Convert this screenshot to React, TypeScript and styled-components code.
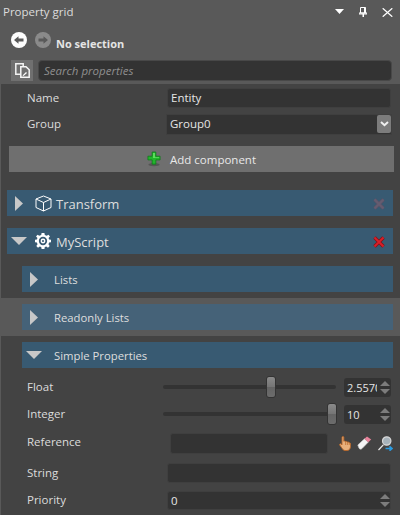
import React from 'react';
import styled, {createGlobalStyle} from 'styled-components';

const GlobalStyle = createGlobalStyle`
  html, body {
    margin: 0;
    padding: 0;
    background: #595959;
  }
  * {
    box-sizing: border-box;
  }
`

const BackIcon = ({dim, flip}: { dim?: boolean, flip?: boolean }) => (
    <svg width="18" height="18" viewBox="0 0 18 18" style={{opacity: dim ? 0.3 : 1, transform: flip ? 'scaleX(-1)' : undefined}}>
        <circle cx="9" cy="9" r="8" fill="#fdfdfd"/>
        <path d="M4 9 L8.5 5.2 V7.4 H13.5 V10.6 H8.5 V12.8 Z" fill="#5a5a5a"/>
    </svg>
)

const PasteIcon = () => (
    <svg width="15" height="15" viewBox="0 0 15 15">
        <path d="M.8 .8 H8.2 V11.2 H.8 Z" fill="none" stroke="#f2f2f2" strokeWidth="1.5"/>
        <path d="M5.8 3.8 H11 L14.2 6.8 V14.2 H5.8 Z" fill="#6f6f6f" stroke="#f6f6f6" strokeWidth="1.5"/>
        <path d="M7.5 12.5 L11 9 L12 10 L8.5 13 Z" fill="#fff"/>
    </svg>
)

const Caret = () => (
    <svg width="9" height="6" viewBox="0 0 9 6"><path d="M0 0 H9 L4.5 5 Z" fill="#fff"/></svg>
)

const Pin = () => (
    <svg width="8" height="10" viewBox="0 0 8 10">
        <path d="M1.5 .5 H6.5 V6 H1.5 Z M0 6 H8 V7 H0 Z" fill="none" stroke="#fff"/>
        <path d="M3.5 6.5 H5 V10 H3.5 Z M5 .5 H6.5 V6 H5 Z" fill="#fff"/>
    </svg>
)

const Close = () => (
    <svg width="11" height="9" viewBox="0 0 11 9">
        <path d="M.7 .3 L10.3 8.7 M10.3 .3 L.7 8.7" stroke="#fff" strokeWidth="1.3"/>
    </svg>
)

const Chevron = () => (
    <svg width="9" height="6" viewBox="0 0 9 6">
        <path d="M1 1 L4.5 4.2 L8 1" fill="none" stroke="#f0f0f0" strokeWidth="2"/>
    </svg>
)

const PlusIcon = () => (
    <svg width="14" height="16" viewBox="0 0 15 17">
        <ellipse cx="7.5" cy="14.5" rx="6" ry="1.8" fill="#555"/>
        <path d="M5.5 1 H9.5 V5.5 H14 V9.5 H9.5 V14 H5.5 V9.5 H1 V5.5 H5.5 Z" fill="#22b52c" stroke="#0c7a18" strokeWidth="0.8"/>
        <path d="M6.5 2 H8.5 V6.5 H13 V7.5 H6.5 Z" fill="#5fe05f"/>
    </svg>
)

const CubeIcon = () => (
    <svg width="17" height="17" viewBox="0 0 17 17" fill="none" stroke="#fff" strokeWidth="1">
        <path d="M8.5 1 L16 4 V12.5 L8.5 16 L1 12.5 V4 Z"/>
        <path d="M1 4 L8.5 7.5 L16 4 M8.5 7.5 V16"/>
    </svg>
)

const GearIcon = () => (
    <svg width="16" height="16" viewBox="0 0 17 17">
        <path
            d="M7 0 H10 L10.4 2.2 L12.4 3 L14.3 1.8 L15.9 3.8 L14.4 5.4 L15 7 L17 7.2 V9.8 L15 10.2 L14.3 12 L15.6 13.8 L13.8 15.6 L12 14.3 L10.4 15 L10 17 H7 L6.6 15 L5 14.3 L3.2 15.6 L1.4 13.8 L2.7 12 L2 10.2 L0 9.8 V7.2 L2 7 L2.6 5.4 L1.1 3.8 L2.7 1.8 L4.6 3 L6.6 2.2 Z"
            fill="#fff"/>
        <circle cx="8.5" cy="8.5" r="4.4" fill="#385a72"/>
        <circle cx="8.5" cy="8.5" r="2.6" fill="#fff"/>
        <circle cx="8.5" cy="8.5" r="1.1" fill="#385a72"/>
    </svg>
)

const RemoveIcon = ({muted}: { muted?: boolean }) => (
    <svg width="12" height="12" viewBox="0 0 12 12">
        <path d="M1.5 1.5 L10.5 10.5 M10.5 1.5 L1.5 10.5" stroke={muted ? '#5a5468' : '#8c0f14'} strokeWidth="3.4"/>
        <path d="M1.5 1.5 L10.5 10.5 M10.5 1.5 L1.5 10.5" stroke={muted ? '#665c70' : '#d9202a'} strokeWidth="1.8"/>
    </svg>
)

const HandIcon = () => (
    <svg width="12" height="15" viewBox="0 0 12 15">
        <path
            d="M3 1.2 C3 .2 4.8 .2 4.8 1.2 V5.2 C5.6 4.8 6.4 5 6.6 5.6 C7.4 5.2 8.2 5.5 8.4 6.1 C9.2 5.8 10 6.1 10.2 6.8 C10.9 6.6 11.5 7.1 11.5 7.8 V10.5 C11.5 12.8 10.2 14.5 8 14.5 H6 C4.6 14.5 3.6 13.4 3 12.2 L.7 9 C.3 8.2 1.2 7.4 2 8 L3 9 Z"
            fill="#e8b07c" stroke="#b8682a" strokeWidth="0.9"/>
        <path d="M6.6 5.6 V9 M8.4 6.1 V9 M10.2 6.8 V9" stroke="#b8682a" strokeWidth="0.7" fill="none"/>
    </svg>
)

const EraserIcon = () => (
    <svg width="15" height="14" viewBox="0 0 15 14">
        <path d="M.8 9 L7.5 2.8 L11.2 6.2 L5 12.6 C4 13.6 2.8 13.2 2 12.2 Z" fill="#f4f4f4" stroke="#cfcfcf" strokeWidth="0.6"/>
        <path d="M7.5 2.8 L10 .5 L14.2 3.5 L11.2 6.2 Z" fill="#e8829a"/>
    </svg>
)

const PickerIcon = () => (
    <svg width="15" height="15" viewBox="0 0 15 15">
        <path d="M.5 14 L5.3 8.8" stroke="#eee" strokeWidth="1.2"/>
        <circle cx="8.7" cy="5" r="4.2" fill="#a6b2ba" stroke="#d8d8d8" strokeWidth="1.2"/>
        <path d="M7.5 12.5 H13.5 M11.5 10.3 L14 12.5 L11.5 14.7" fill="none" stroke="#2a9be0" strokeWidth="1.6"/>
    </svg>
)

const Triangle = ({open}: { open?: boolean }) => (
    open
        ? <svg width="16" height="8" viewBox="0 0 16 8"><path d="M0 0 H16 L8 8 Z" fill="#c8c8c8"/></svg>
        : <svg width="8" height="15" viewBox="0 0 8 15"><path d="M0 0 L8 7.5 L0 15 Z" fill="#c8c8c8"/></svg>
)

const Spinner = () => (
    <SpinArrows>
        <svg width="10" height="5" viewBox="0 0 10 5"><path d="M5 0 L10 5 H0 Z" fill="#7c7c7c"/></svg>
        <svg width="10" height="5" viewBox="0 0 10 5"><path d="M0 0 H10 L5 5 Z" fill="#7c7c7c"/></svg>
    </SpinArrows>
)

const Section = ({title, top, indent, open, hover, icon, remove}: {
    title: string, top?: number, indent?: boolean, open?: boolean, hover?: boolean, icon?: React.ReactNode, remove?: React.ReactNode
}) => (
    <SectionBar top={top} indent={indent} hover={hover}>
        <ArrowSlot indent={indent}><Triangle open={open}/></ArrowSlot>
        {icon && <IconSlot>{icon}</IconSlot>}
        <SectionTitle indent={indent}>{title}</SectionTitle>
        {remove && <RemoveSlot>{remove}</RemoveSlot>}
    </SectionBar>
)

const App = () => {
    return (
        <Panel>
            <GlobalStyle/>
            <TitleBar>
                <Title>Property grid</Title>
                <TitleButtons>
                    <Caret/>
                    <Pin/>
                    <Close/>
                </TitleButtons>
            </TitleBar>
            <NavRow>
                <BackIcon/>
                <BackIcon dim flip/>
                <Selection>No selection</Selection>
            </NavRow>
            <SearchRow>
                <ToggleButton><PasteIcon/></ToggleButton>
                <SearchBox>Search properties</SearchBox>
            </SearchRow>
            <Grid>
                <Row>
                    <Label>Name</Label>
                    <Field>Entity</Field>
                </Row>
                <Row top={6}>
                    <Label lift={1}>Group</Label>
                    <ComboField>
                        Group0
                        <ComboButton><Chevron/></ComboButton>
                    </ComboField>
                </Row>
                <AddButton>
                    <PlusIcon/>
                    Add component
                </AddButton>
                <Section top={18} title="Transform" icon={<CubeIcon/>} remove={<RemoveIcon muted/>}/>
                <Section top={12} title="MyScript" open icon={<GearIcon/>} remove={<RemoveIcon/>}/>
                <Section top={12} title="Lists" indent/>
                <HoverBand>
                    <Section title="Readonly Lists" indent hover/>
                </HoverBand>
                <Section top={6} title="Simple Properties" indent open/>
                <Row top={9}>
                    <Label>Float</Label>
                    <Slider>
                        <Thumb style={{left: `${(266 - 163) / 173 * 100}%`}}/>
                    </Slider>
                    <NumberBox>
                        <NumberText>2.5570</NumberText>
                        <Spinner/>
                    </NumberBox>
                </Row>
                <Row top={7}>
                    <Label lift={1}>Integer</Label>
                    <Slider>
                        <Thumb style={{left: `${(327 - 163) / 173 * 100}%`}}/>
                    </Slider>
                    <NumberBox>
                        <NumberText>10</NumberText>
                        <Spinner/>
                    </NumberBox>
                </Row>
                <Row top={9}>
                    <Label lift={4}>Reference</Label>
                    <ReferenceBox/>
                    <ReferenceTools>
                        <HandIcon/>
                        <EraserIcon/>
                        <PickerIcon/>
                    </ReferenceTools>
                </Row>
                <Row top={10}>
                    <Label>String</Label>
                    <Field/>
                </Row>
                <Row top={7}>
                    <Label lift={1}>Priority</Label>
                    <PriorityField>
                        0
                        <Spinner/>
                    </PriorityField>
                </Row>
            </Grid>
        </Panel>
    );
};

const Panel = styled.div`
  width: 400px;
  height: 515px;
  overflow: hidden;
  background: #595959;
  color: #e6e6e6;
  font-family: "Open Sans", "Liberation Sans", sans-serif;
  font-size: 11.5px;
  display: flex;
  flex-direction: column;
`
const TitleBar = styled.div`
  height: 24px;
  flex: none;
  display: flex;
  align-items: center;
  justify-content: space-between;
  padding: 0 7px 0 3px;
`
const Title = styled.div`
  color: #dcdcdc;
  margin-top: -2px;
`
const TitleButtons = styled.div`
  display: flex;
  align-items: center;
  gap: 15px;
`
const NavRow = styled.div`
  height: 34px;
  flex: none;
  display: flex;
  align-items: center;
  gap: 6px;
  padding-left: 10px;
  padding-bottom: 2px;
`
const Selection = styled.div`
  font-size: 11px;
  font-weight: 700;
  margin: 6px 0 0 -2px;
  color: #e4e4e4;
`
const SearchRow = styled.div`
  height: 26px;
  flex: none;
  display: flex;
  gap: 5px;
  padding: 2px 8px 0 11px;
`
const ToggleButton = styled.div`
  width: 22px;
  height: 21px;
  background: #707070;
  display: flex;
  align-items: center;
  justify-content: center;
`
const SearchBox = styled.div`
  flex: 1;
  height: 21px;
  background: #333;
  border: 1px solid #484848;
  border-radius: 4px;
  padding-left: 5px;
  line-height: 20px;
  font-style: italic;
  color: #8f8f8f;
`
const Grid = styled.div`
  flex: 1;
  background: #434343;
  margin-left: 1px;
  padding-top: 4px;
  display: flex;
  flex-direction: column;
`
const Row = styled.div<{ top?: number }>`
  height: 20px;
  flex: none;
  margin-top: ${({top}) => top || 0}px;
  display: flex;
  align-items: center;
  padding: 0 9px 0 26px;
`
const Label = styled.div<{ lift?: number }>`
  width: 140px;
  flex: none;
  color: #dcdcdc;
  margin-top: -${({lift}) => lift ?? 2}px;
`
const Field = styled.div`
  flex: 1;
  height: 20px;
  background: #333;
  border: 1px solid #3f3f3f;
  border-radius: 3px;
  padding-left: 3px;
  line-height: 18px;
  display: flex;
  justify-content: space-between;
  color: #e6e6e6;
`
const ComboField = styled(Field)`
  height: 21px;
  margin: 0 -1px;
  border-radius: 0;
`
const PriorityField = styled(Field)`
  height: 19px;
  line-height: 17px;
  align-items: center;
`
const ComboButton = styled.div`
  width: 14px;
  height: 18px;
  margin: 0 0 0 auto;
  background: #7c7c7c;
  border-radius: 2px;
  display: flex;
  align-items: center;
  justify-content: center;
`
const AddButton = styled.div`
  height: 26px;
  flex: none;
  margin: 12px 6px 0 8px;
  background: #6f6f6f;
  display: flex;
  align-items: center;
  justify-content: center;
  gap: 9px;
  color: #e8e8e8;
`
const SectionBar = styled.div<{ top?: number, indent?: boolean, hover?: boolean }>`
  height: 26px;
  flex: none;
  margin: ${({top}) => top || 0}px 7px 0 ${({indent}) => indent ? 21 : 6}px;
  background: ${({hover}) => hover ? '#456278' : '#385a72'};
  display: flex;
  align-items: center;
`
const ArrowSlot = styled.div<{ indent?: boolean }>`
  width: 24px;
  margin-right: ${({indent}) => indent ? 8 : 4}px;
  flex: none;
  display: flex;
  justify-content: center;
`
const IconSlot = styled.div`
  width: 21px;
  flex: none;
  display: flex;
  align-items: center;
`
const SectionTitle = styled.div<{ indent?: boolean }>`
  font-size: ${({indent}) => indent ? 11.3 : 13}px;
  padding-top: ${({indent}) => indent ? 0 : 1}px;
  color: #dedede;
`
const RemoveSlot = styled.div`
  margin: 1px 8px 0 auto;
  display: flex;
`
const HoverBand = styled.div`
  flex: none;
  background: #595959;
  padding: 6px 0;
  margin-top: 6px;
`
const Slider = styled.div`
  width: 173px;
  height: 4px;
  flex: none;
  margin: 0 8px 0 -4px;
  background: #333;
  border-radius: 2px;
  position: relative;
`
const Thumb = styled.div`
  position: absolute;
  top: -9px;
  width: 10px;
  height: 22px;
  border: 1px solid #333;
  border-radius: 3px;
  background: linear-gradient(#8a8a8a 0%, #757575 50%, #646464 50%, #6c6c6c 100%);
`
const NumberBox = styled.div`
  width: 47px;
  height: 19px;
  background: #333;
  border-radius: 3px;
  display: flex;
  align-items: center;
  justify-content: space-between;
  padding: 0 1px 0 3px;
`
const NumberText = styled.div`
  width: 30px;
  overflow: hidden;
  font-size: 11px;
`
const SpinArrows = styled.div`
  display: flex;
  flex-direction: column;
  gap: 3px;
  justify-content: center;
`
const ReferenceBox = styled.div`
  width: 158px;
  height: 21px;
  margin-left: 3px;
  flex: none;
  background: #333;
  border: 1px solid #3f3f3f;
  border-radius: 3px;
`
const ReferenceTools = styled.div`
  display: flex;
  align-items: center;
  gap: 6px;
  margin-left: 11px;
`

export default App;
